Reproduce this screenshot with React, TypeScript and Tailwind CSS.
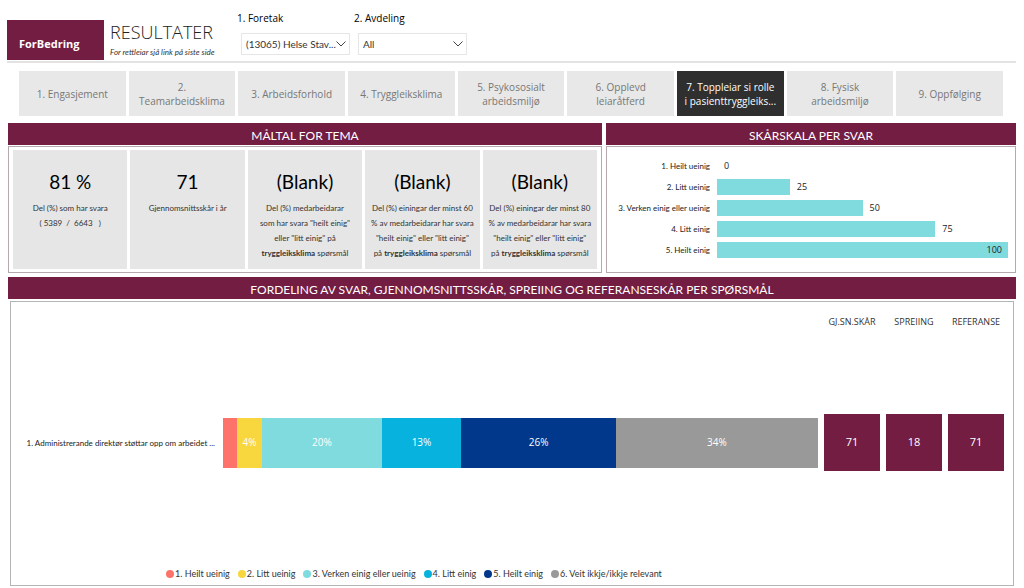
import { Fragment } from "react";
import type { ReactNode } from "react";

const tabs = [
  "1. Engasjement",
  "2.\nTeamarbeidsklima",
  "3. Arbeidsforhold",
  "4. Tryggleiksklima",
  "5. Psykososialt\narbeidsmiljø",
  "6. Opplevd\nleiaråtferd",
  "7. Toppleiar si rolle\ni pasienttryggleiks...",
  "8. Fysisk\narbeidsmiljø",
  "9. Oppfølging",
];

const metrics: { value: string; text: ReactNode }[] = [
  { value: "81 %", text: <>Del (%) som har svara<br />( 5389 &nbsp;/ &nbsp;6643 &nbsp;&nbsp;)</> },
  { value: "71", text: "Gjennomsnittsskår i år" },
  { value: "(Blank)", text: <>Del (%) medarbeidarar<br />som har svara "heilt einig"<br />eller "litt einig" på<br /><b>tryggleiksklima</b> spørsmål</> },
  { value: "(Blank)", text: <>Del (%) einingar der minst 60<br />% av medarbeidarar har svara<br />"heilt einig" eller "litt einig"<br />på <b>tryggleiksklima</b> spørsmål</> },
  { value: "(Blank)", text: <>Del (%) einingar der minst 80<br />% av medarbeidarar har svara<br />"heilt einig" eller "litt einig"<br />på <b>tryggleiksklima</b> spørsmål</> },
];

const scale = [
  { label: "1. Heilt ueinig", score: 0 },
  { label: "2. Litt ueinig", score: 25 },
  { label: "3. Verken einig eller ueinig", score: 50 },
  { label: "4. Litt einig", score: 75 },
  { label: "5. Heilt einig", score: 100 },
];

const answers = [
  { label: "1. Heilt ueinig", color: "bg-[#fd736b]", share: 2.3, text: "" },
  { label: "2. Litt ueinig", color: "bg-[#f8d63d]", share: 4.3, text: "4%" },
  { label: "3. Verken einig eller ueinig", color: "bg-[#7fdbdd]", share: 20.1, text: "20%" },
  { label: "4. Litt einig", color: "bg-[#07b3de]", share: 13.4, text: "13%" },
  { label: "5. Heilt einig", color: "bg-[#01388b]", share: 26, text: "26%" },
  { label: "6. Veit ikkje/ikkje relevant", color: "bg-[#999999]", share: 34, text: "34%" },
];

const scores = [
  { label: "GJ.SN.SKÅR", value: 71 },
  { label: "SPREIING", value: 18 },
  { label: "REFERANSE", value: 71 },
];

function Band({ children }: { children: ReactNode }) {
  return (
    <h2 className="flex h-[22px] items-center justify-center bg-[#731d43] pt-1 font-['Lato','Liberation_Sans',sans-serif] text-[12px] leading-4 text-white">
      {children}
    </h2>
  );
}

function Filter({ id, label, value }: { id: string; label: string; value: string }) {
  return (
    <div className="w-[113px]">
      <label htmlFor={id} className="block text-[10px] leading-4 text-black">{label}</label>
      <div className="relative mt-[7px] ml-1">
        <select id={id} className="block h-[22px] w-full appearance-none border border-[#e6e6e6] bg-white pr-3 pl-1 font-['Lato','Liberation_Sans',sans-serif] text-[10px] text-[#333]">
          <option>{value}</option>
        </select>
        <svg viewBox="0 0 10 6" className="pointer-events-none absolute top-2 right-1 h-[6px] w-[10px]" fill="none" stroke="#444" strokeWidth="1">
          <path d="M0.5 0.5 5 5 9.5 0.5" />
        </svg>
      </div>
    </div>
  );
}

export default function App() {
  return (
    <main className="flex min-h-screen flex-col bg-white pr-2 pb-[2px] pl-[7px] font-['Open_Sans','Noto_Sans',sans-serif] text-[#333]">
      <header className="flex h-[63px] border-b-2 border-[#e3e3e3]">
        <div className="mt-5 flex h-10 w-[97px] items-center bg-[#731d43] pt-2 pl-3 text-[11px] font-bold text-white">
          ForBedring
        </div>
        <div className="ml-[6px] w-[127px] pt-5">
          <h1 className="text-[18px] leading-6 font-light text-[#222]">RESULTATER</h1>
          <p className="font-['Lato','Liberation_Sans',sans-serif] text-[8px] leading-4 whitespace-nowrap italic">For rettleiar sjå link på siste side</p>
        </div>
        <div className="flex gap-1 pt-[10px]">
          <Filter id="foretak" label="1. Foretak" value="(13065) Helse Stav..." />
          <Filter id="avdeling" label="2. Avdeling" value="All" />
        </div>
      </header>

      <nav className="mt-2 mr-[13px] ml-3 grid grid-cols-9 gap-[3px]">
        {tabs.map((tab, i) => (
          <button
            key={tab}
            type="button"
            aria-pressed={i === 6}
            className={
              i === 6
                ? "h-[45px] bg-[#2f2f2f] px-1 text-[10px] leading-[14px] whitespace-pre-line text-white"
                : "h-[45px] bg-[#e8e8e8] px-1 text-[10px] leading-[14px] whitespace-pre-line text-[#777]"
            }
          >
            {tab}
          </button>
        ))}
      </nav>

      <div className="mt-[7px] ml-px grid grid-cols-[594fr_410fr] gap-1">
        <section className="flex flex-col">
          <Band>MÅLTAL FOR TEMA</Band>
          <div className="mt-px grid grow grid-cols-5 gap-[3px] border border-[#b5a9ae] px-1 py-[3px]">
            {metrics.map((m, i) => (
              <div key={i} className="bg-[#e6e6e6] pt-5 text-center font-['Lato','Liberation_Sans',sans-serif]">
                <p className="text-[19px] leading-6 text-black">{m.value}</p>
                <p className="mt-[7px] pb-2 text-[8px] leading-[15px] whitespace-nowrap">{m.text}</p>
              </div>
            ))}
          </div>
        </section>

        <section className="flex flex-col">
          <Band>SKÅRSKALA PER SVAR</Band>
          <div className="mt-px grid grow grid-cols-[auto_1fr] content-start items-center gap-x-[7px] gap-y-[5px] border border-[#b5a9ae] pt-[11px] pr-[7px] pl-[7px]">
            {scale.map((row) => (
              <Fragment key={row.label}>
                <span className="w-24 text-right font-['Lato','Liberation_Sans',sans-serif] text-[8px] leading-4 whitespace-nowrap text-[#222]">{row.label}</span>
                <div className="flex h-4 items-center text-[9px] text-[#222]">
                  <div className="flex h-4 items-center justify-end bg-[#7fdbdd]" style={{ width: `${row.score}%` }}>
                    {row.score === 100 && <span className="pr-[6px]">100</span>}
                  </div>
                  {row.score < 100 && <span className="pl-[7px]">{row.score}</span>}
                </div>
              </Fragment>
            ))}
          </div>
        </section>
      </div>

      <section className="mt-1 ml-px flex grow flex-col">
        <Band>FORDELING AV SVAR, GJENNOMSNITTSSKÅR, SPREIING OG REFERANSESKÅR PER SPØRSMÅL</Band>
        <div className="mt-[2px] mr-[2px] ml-[2px] flex grow flex-col border border-[#b5b5b5] pr-[9px] pb-1 pl-[13px]">
          <div className="mt-3 flex justify-end gap-[6px]">
            {scores.map((s) => (
              <span key={s.label} className="flex w-14 justify-center text-[9px] leading-4 whitespace-nowrap">{s.label}</span>
            ))}
          </div>
          <div className="flex grow items-center pb-3">
            <p className="w-[199px] truncate pr-2 text-right font-['Lato','Liberation_Sans',sans-serif] text-[8px] leading-4 text-[#222]">1. Administrerande direktør støttar opp om arbeidet ...</p>
            <div className="flex h-[50px] grow">
              {answers.map((a) => (
                <div key={a.label} className={`flex items-center justify-center text-[10px] text-white ${a.color}`} style={{ width: `${a.share}%` }}>
                  {a.text}
                </div>
              ))}
            </div>
            <div className="ml-[6px] flex gap-[6px]">
              {scores.map((s) => (
                <div key={s.label} className="flex h-[57px] w-14 items-center justify-center bg-[#731d43] text-[11px] text-white">
                  {s.value}
                </div>
              ))}
            </div>
          </div>
          <ul className="ml-[142px] flex gap-2 font-['Lato','Liberation_Sans',sans-serif] text-[9px] leading-[14px]">
            {answers.map((a) => (
              <li key={a.label} className="flex items-center gap-px whitespace-nowrap">
                <span className={`size-2 rounded-full ${a.color}`} />
                {a.label}
              </li>
            ))}
          </ul>
        </div>
      </section>
    </main>
  );
}
